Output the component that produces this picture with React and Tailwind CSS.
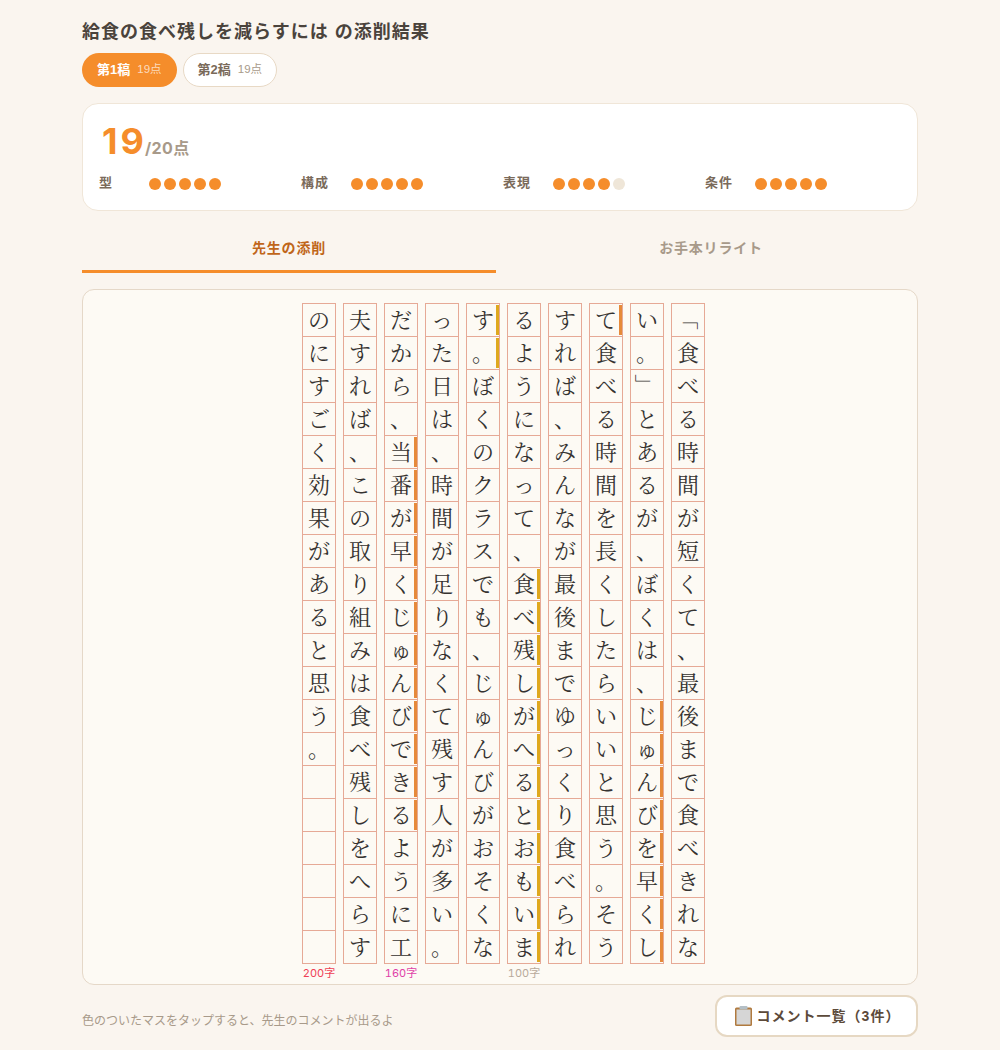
const columns = [
  { text: 'のにすごく効果があると思う。      ', label: '200字', labelColor: 'text-[#ef3f56]' },
  { text: '夫すれば、この取り組みは食べ残しをへらす' },
  { text: 'だから、当番が早くじゅんびできるように工', from: 4, to: 15, mark: 'bg-[#e68a3a]', label: '160字', labelColor: 'text-[#e03fa8]' },
  { text: 'った日は、時間が足りなくて残す人が多い。' },
  { text: 'す。ぼくのクラスでも、じゅんびがおそくな', from: 0, to: 1, mark: 'bg-[#dfa81e]' },
  { text: 'るようになって、食べ残しがへるとおもいま', from: 8, to: 19, mark: 'bg-[#dfa81e]', label: '100字', labelColor: 'text-[#b8a99a]' },
  { text: 'すれば、みんなが最後までゆっくり食べられ' },
  { text: 'て食べる時間を長くしたらいいと思う。そう', from: 0, to: 0, mark: 'bg-[#e68a3a]' },
  { text: 'い。」とあるが、ぼくは、じゅんびを早くし', from: 12, to: 19, mark: 'bg-[#e68a3a]' },
  { text: '「食べる時間が短くて、最後まで食べきれな' },
];

const scores = [
  { name: '型', value: 5 },
  { name: '構成', value: 5 },
  { name: '表現', value: 4 },
  { name: '条件', value: 5 },
];

function ClipboardIcon() {
  return (
    <svg width="17" height="20" viewBox="0 0 17 20" className="shrink-0">
      <rect x="0" y="1.5" width="17" height="18.5" rx="1.5" fill="#b07a3f" />
      <rect x="1.5" y="3.5" width="14" height="15" fill="#d6d6d6" />
      <rect x="4.5" y="0" width="8" height="3.5" rx="1" fill="#b4bfc6" />
    </svg>
  );
}

function Column({ col }) {
  return (
    <div className="w-[34px] shrink-0">
      <div className="border-t border-[#e6a996]">
        {Array.from(col.text).map((ch, i) => (
          <div
            key={i}
            className="relative flex h-[33px] items-center justify-center border-x border-b border-[#e6a996] pb-[3px] text-[22px] leading-none text-[#353230]"
          >
            {/* brackets turn with the vertical writing */}
            {ch === '「' || ch === '」' ? <span className="inline-block rotate-90">{ch}</span> : ch.trim()}
            {col.mark && i >= col.from && i <= col.to && (
              <span className={`absolute top-[1px] right-0 bottom-[1px] w-[3px] ${col.mark}`} />
            )}
          </div>
        ))}
      </div>
      <div className={`mt-[3px] h-[13px] text-center font-['Inter','Noto_Sans_CJK_JP',sans-serif] text-[11px] leading-[13px] whitespace-nowrap tabular-nums ${col.labelColor || ''}`}>
        {col.label}
      </div>
    </div>
  );
}

export default function App() {
  return (
    <div className="min-h-[1050px] bg-[#faf5ef] font-['Liberation_Sans','Noto_Sans_CJK_JP',sans-serif] text-[#4a4038]">
      <div className="mx-auto w-[836px] pt-[19px]">
        <h1 className="text-lg leading-[27px] font-bold tracking-[1px] text-[#4a433c]">給食の食べ残しを減らすには の添削結果</h1>

        {/* Draft tabs */}
        <div className="mt-[7px] flex gap-[6px]">
          <button className="flex h-[34px] items-center gap-[7px] rounded-full bg-[#f58d2b] px-[15px] text-[13px] font-bold text-white">
            第1稿<span className="text-[11.5px] font-normal text-white/70">19点</span>
          </button>
          <button className="flex h-[34px] items-center gap-[7px] rounded-full border border-[#e8d9c5] bg-white px-[14px] text-[13px] font-bold text-[#7a6a5a]">
            第2稿<span className="text-[11.5px] font-normal text-[#a89a8a]">19点</span>
          </button>
        </div>

        {/* Score card */}
        <div className="mt-4 h-[108px] rounded-2xl border border-[#f0e6d8] bg-white px-4 pt-[15px]">
          <div className="flex h-[44px] items-baseline pl-[3px] font-['Inter','Noto_Sans_CJK_JP',sans-serif]">
            <span className="text-4xl leading-[44px] font-bold tracking-[3px] text-[#f58d2b]">19</span>
            <span className="-ml-[2px] text-base font-bold tracking-[0.4px] text-[#a89a8a]">/20点</span>
          </div>
          <div className="mt-[11px] grid grid-cols-[repeat(4,202px)]">
            {scores.map((s) => (
              <div key={s.name} className="flex items-center">
                <span className="w-[50px] -translate-y-[1px] text-[13px] leading-5 font-bold tracking-[1px] text-[#7a6a5a]">{s.name}</span>
                <div className="flex gap-[3px]">
                  {[0, 1, 2, 3, 4].map((n) => (
                    <span key={n} className={`h-3 w-3 rounded-full ${n < s.value ? 'bg-[#f58d2b]' : 'bg-[#efe6d8]'}`} />
                  ))}
                </div>
              </div>
            ))}
          </div>
        </div>

        {/* View tabs */}
        <div className="mt-[17px] flex gap-2">
          <div className="h-[45px] flex-1 border-b-[3px] border-[#f58d2b] pt-[8px] text-center text-sm leading-[24px] font-bold tracking-[0.8px] text-[#c0661a]">先生の添削</div>
          <div className="h-[45px] flex-1 pt-[8px] text-center text-sm leading-[24px] font-bold tracking-[0.8px] text-[#a89a8a]">お手本リライト</div>
        </div>

        {/* Manuscript */}
        <div className="mt-4 flex h-[696px] justify-center gap-[7px] rounded-xl border border-[#e5d8c8] bg-[#fdfaf4] pt-[13px] pl-[7px] font-['Noto_Serif_CJK_JP','Liberation_Serif','Noto_Sans_CJK_JP',serif]">
          {columns.map((col, i) => (
            <Column key={i} col={col} />
          ))}
        </div>

        {/* Footer */}
        <div className="mt-[10px] flex items-start justify-between">
          <p className="mt-[17px] text-xs leading-[18px] text-[#a89a8a]">色のついたマスをタップすると、先生のコメントが出るよ</p>
          <button className="flex h-[42px] w-[203px] items-center justify-center gap-[5px] rounded-xl border-2 border-[#e6d8c3] bg-white pl-[2px] text-sm font-bold tracking-[1px] text-[#5c4a3a]">
            <ClipboardIcon />
            コメント一覧（3件）
          </button>
        </div>
      </div>
    </div>
  );
}
